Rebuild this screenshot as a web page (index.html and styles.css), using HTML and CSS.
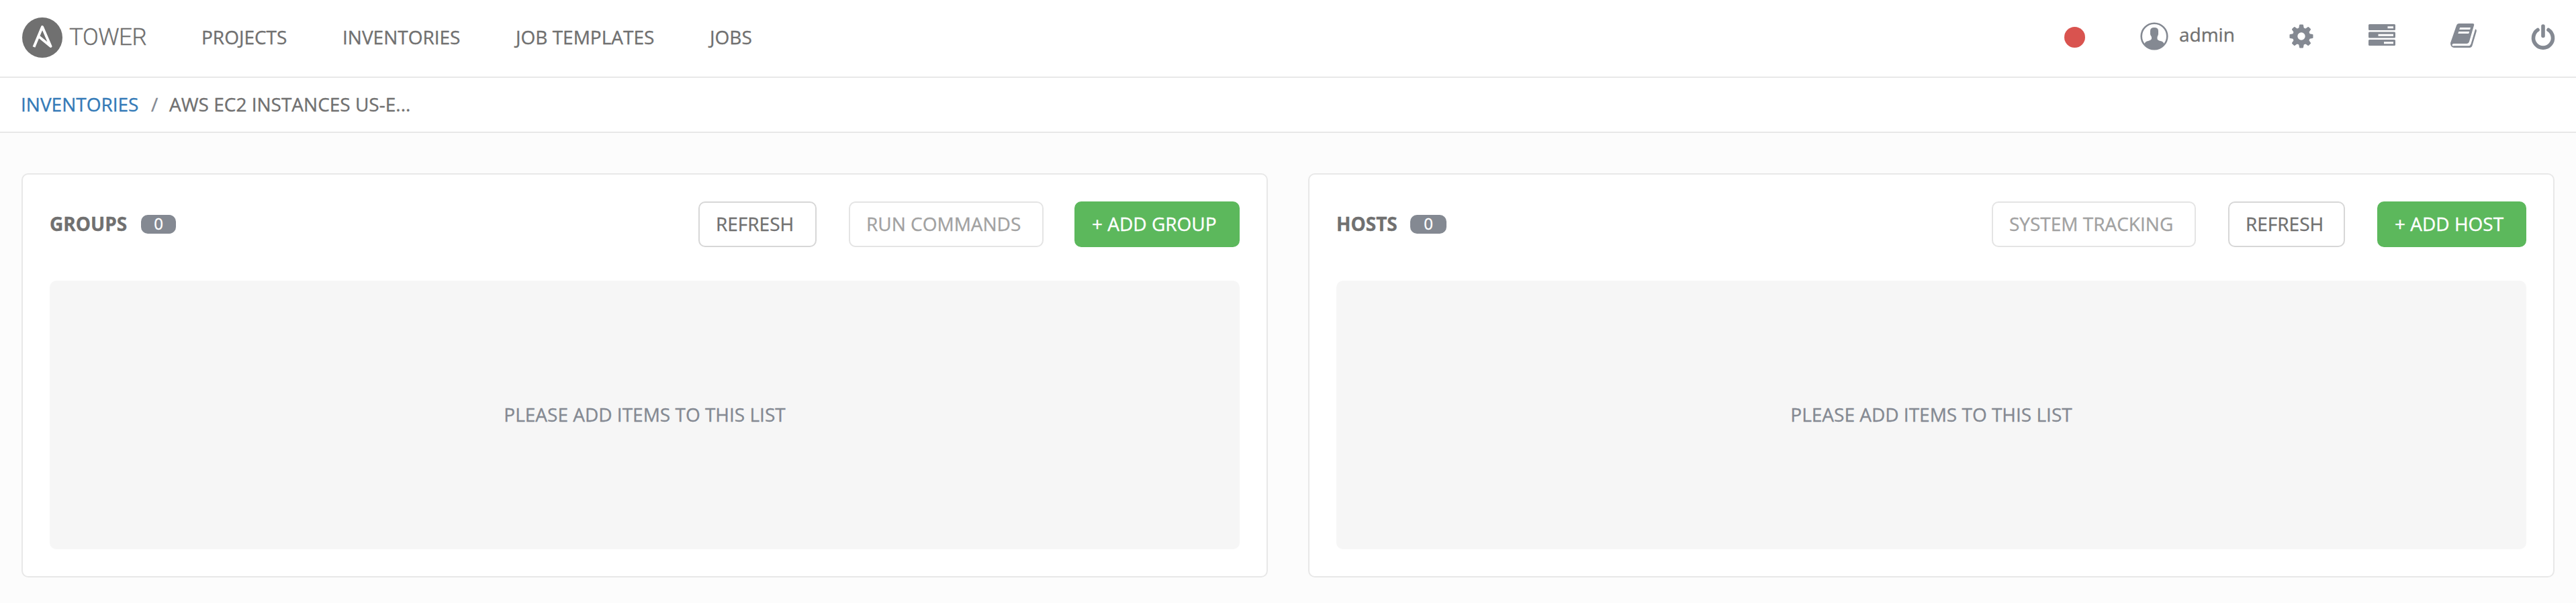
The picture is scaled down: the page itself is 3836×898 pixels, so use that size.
FILE: index.html
```html
<!DOCTYPE html>
<html lang="en">
<head>
<meta charset="utf-8">
<title>Tower</title>
<link rel="stylesheet" href="styles.css">
</head>
<body>
<header class="topbar">
  <div class="logo">
    <svg class="logo-mark" width="60" height="60" viewBox="0 0 60 60"><circle cx="30" cy="30" r="30" fill="#707070"/><path d="M17.500 44 30 14 42.500 43 25.500 29" fill="none" stroke="#fff" stroke-width="4" stroke-linejoin="round"/></svg>
    <span class="logo-text">TOWER</span>
  </div>
  <nav class="nav">
    <a class="nav-projects">PROJECTS</a>
    <a class="nav-inventories">INVENTORIES</a>
    <a class="nav-templates">JOB TEMPLATES</a>
    <a class="nav-jobs">JOBS</a>
  </nav>
  <div class="tools">
    <span class="status"></span>
    <div class="user">
      <svg width="42" height="42" viewBox="0 0 42 42"><circle cx="21" cy="21" r="19.300" fill="none" stroke="#848992" stroke-width="2.600"/><path d="M15 13Q15 8 21 8T27 13V18Q26.500 20 25.500 22V25Q26 27 30 28Q34.500 28.500 36 33A19.300 19.300 0 0 1 6 33Q7.500 28.500 12 28Q16 27 17 25V22Q15.500 20 15 18Z" fill="#848992"/></svg>
      <span class="user-name">admin</span>
    </div>
    <svg class="gear" width="36" height="36" viewBox="-18 -18 36 36"><g fill="#848992"><g id="teeth"><path id="tooth" d="M-4-11-3-16.500Q-2.800-17.500-2-17.500H2Q2.800-17.500 3-16.500L4-11V11L3 16.500Q2.800 17.500 2 17.500H-2Q-2.800 17.500-3 16.500L-4 11Z"/><use href="#tooth" transform="rotate(45)"/></g><use href="#teeth" transform="rotate(90)"/><circle r="13"/></g><circle r="5.700" fill="#fff"/></svg>
    <svg class="servers" width="40" height="32" viewBox="0 0 40 32"><g fill="#848992"><rect width="40" height="9" rx="1.500"/><rect y="11.500" width="40" height="9" rx="1.500"/><rect y="23" width="40" height="9" rx="1.500"/></g><path d="M28.500 3.300H37V6.300H28.500ZM14.500 14.700H37V17.700H14.500ZM23 26.200H37V29.200H23Z" fill="#fff"/></svg>
    <svg class="book" width="40" height="36" viewBox="0 0 40 36"><path d="M13 0H33Q36 0 35 3L28 27Q27 30 24 30H5Q2.500 30 2.500 32T5 33.300H27Q29.500 33.300 30.500 30.500L37 8.500Q39.500 8.500 38.700 12L32.500 33Q31.500 36 28.500 36H5Q0 35 0 29L9 3Q10 0 13 0Z" fill="#848992"/><path d="M14.200 6H30L29.200 9H13.200ZM12.300 12H28.200L27.200 15H11.300Z" fill="#fff"/></svg>
    <svg class="power" width="34" height="38" viewBox="1 0 34 38"><path d="M10 8.500A14.500 14.500 0 1 0 26 8.500M18 3V17.500" fill="none" stroke="#848992" stroke-width="5.600" stroke-linecap="round"/></svg>
  </div>
</header>
<div class="crumbs"><a class="crumb-link">INVENTORIES</a><span class="crumb-sep">/</span><span class="crumb-current">AWS EC2 INSTANCES US-E...</span></div>
<main class="panels">
  <section class="panel">
    <div class="panel-head">
      <h2 class="title title-groups">GROUPS</h2><span class="badge badge-groups">0</span>
      <div class="actions">
        <button class="btn w-refresh">REFRESH</button>
        <button class="btn disabled w-run">RUN COMMANDS</button>
        <button class="btn add w-group">+ ADD GROUP</button>
      </div>
    </div>
    <div class="empty">PLEASE ADD ITEMS TO THIS LIST</div>
  </section>
  <section class="panel">
    <div class="panel-head">
      <h2 class="title title-hosts">HOSTS</h2><span class="badge badge-hosts">0</span>
      <div class="actions hosts-actions">
        <button class="btn disabled w-tracking">SYSTEM TRACKING</button>
        <button class="btn w-refresh-hosts">REFRESH</button>
        <button class="btn add w-host">+ ADD HOST</button>
      </div>
    </div>
    <div class="empty">PLEASE ADD ITEMS TO THIS LIST</div>
  </section>
</main>
</body>
</html>
```
FILE: styles.css
```css
* { box-sizing: border-box; }
body {
  margin: 0;
  height: 898px;
  background: #fcfcfc;
  color: #707070;
  font: 28px/40px "Open Sans", sans-serif;
  overflow: hidden;
  white-space: nowrap;
  -webkit-text-stroke: 0.35px;
}
svg { display: block; flex: none; overflow: visible; }

.topbar {
  display: flex;
  align-items: center;
  height: 116px;
  padding: 0 32px 2px;
  background: #fff;
  border-bottom: 2px solid #e8e8e8;
}
.logo { display: flex; align-items: center; width: 268px; flex: none; }
.logo-mark { margin-left: 1px; }
.logo-text { margin-left: 10px; font: 300 35px/60px Roboto, sans-serif; letter-spacing: -0.5px; }
.nav { display: flex; margin-top: -2px; }
.nav-projects { width: 210px; }
.nav-inventories { width: 258px; }
.nav-templates { width: 289px; }
.tools { display: flex; align-items: center; margin-left: auto; height: 112px; padding-bottom: 4px; }
.status { width: 31px; height: 31px; border-radius: 50%; background: #d9534f; margin: 2px 82px 0 0; }
.user { display: flex; align-items: center; width: 222px; }
.user-name { margin: -6px 0 0 16px; }
.servers { margin: -4px 82px 0 82px; }
.book { margin: -2px 81px 0 0; }
.power { margin-top: 1px; }

.crumbs {
  display: flex;
  height: 82px;
  padding: 19px 0 0 31px;
  background: #fff;
  border-bottom: 2px solid #e8e8e8;
}
.crumb-link { width: 194px; color: #337ab7; }
.crumb-sep { width: 27px; color: #848992; }

.panels { display: grid; grid-template-columns: 1fr 1fr; gap: 60px; padding: 60px 32px 0; }
.panel {
  height: 602px;
  padding: 40px;
  background: #fff;
  border: 2px solid #e8e8e8;
  border-radius: 10px;
}
.panel-head { display: flex; align-items: center; height: 68px; }
.title { margin: -2px 0 0; font-size: 28px; line-height: 40px; font-weight: 700; }
.title-groups { width: 136px; }
.title-hosts { width: 110px; }
.badge {
  height: 28px;
  border-radius: 10px;
  background: #848992;
  color: #fff;
  font-size: 24px;
  line-height: 26px;
  text-align: center;
}
.badge-groups { width: 52px; }
.badge-hosts { width: 54px; }
.actions { display: flex; margin-left: auto; }
.btn {
  height: 68px;
  margin: 0 0 0 48px;
  padding: 0 0 2px 24px;
  border: 2px solid #d7d7d7;
  border-radius: 10px;
  background: #fff;
  color: #707070;
  font: 28px/40px "Open Sans", sans-serif;
  text-align: left;
  -webkit-text-stroke: 0.35px;
}
.disabled { opacity: .65; }
.add { margin-left: 46px; background: #5cb85c; border-color: #5cb85c; color: #fff; }
.hosts-actions .add { margin-left: 48px; }
.w-refresh { width: 176px; }
.w-run { width: 290px; }
.w-group { width: 246px; }
.w-tracking { width: 304px; }
.w-refresh-hosts { width: 174px; }
.w-host { width: 222px; }
.empty {
  display: flex;
  align-items: center;
  justify-content: center;
  height: 400px;
  margin-top: 50px;
  padding-bottom: 2px;
  border-radius: 10px;
  background: #f6f6f6;
  color: #848992;
}
```
